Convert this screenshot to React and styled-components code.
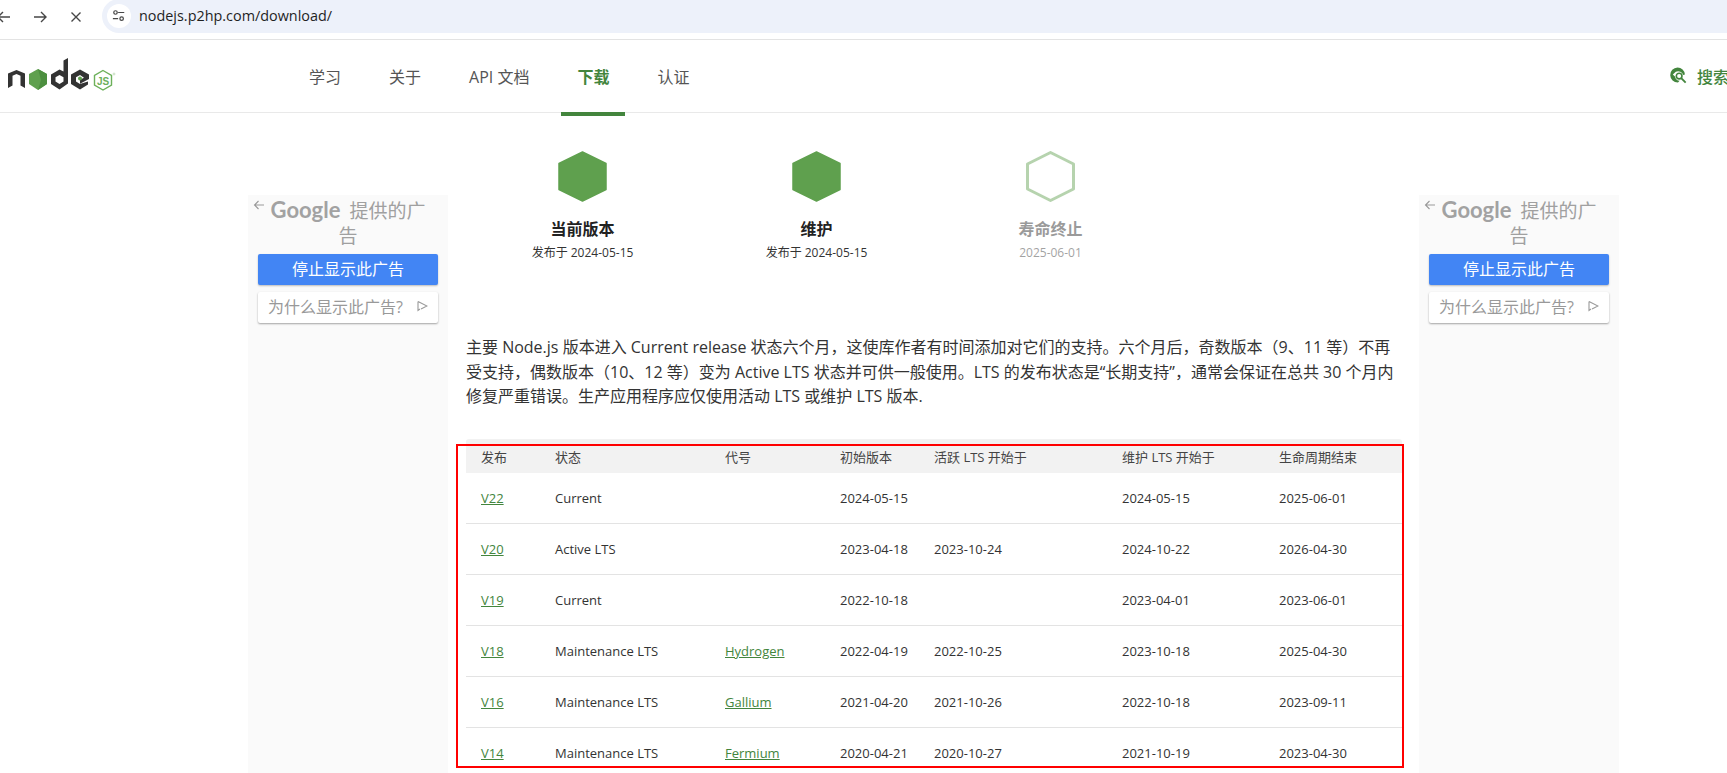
import React from "react";
import styled, { createGlobalStyle } from "styled-components";

const Global = createGlobalStyle`
  html, body { margin: 0; padding: 0; height: 773px; overflow: hidden; background: #fff; }
  body { font-family: "Open Sans", "Noto Sans CJK SC", sans-serif; color: #333; }
  * { box-sizing: border-box; }
`;

const Page = styled.div`
  width: 1727px;
  height: 773px;
  overflow: hidden;
  position: relative;
`;

const Toolbar = styled.div`
  height: 40px;
  border-bottom: 1px solid #e3e3e3;
  display: flex;
  align-items: flex-start;
  color: #474747;
`;

const NavIcons = styled.div`
  display: flex;
  align-items: center;
  gap: 20px;
  height: 33px;
  margin-left: -4px;
  width: 106px;
  flex: none;
`;

const Omnibox = styled.div`
  flex: 1;
  height: 34px;
  margin-top: -1px;
  background: #edf1fa;
  border-radius: 17px 0 0 17px;
  display: flex;
  align-items: center;
  padding-left: 5px;
`;

const SiteChip = styled.span`
  width: 24px;
  height: 24px;
  border-radius: 50%;
  background: #fff;
  display: flex;
  align-items: center;
  justify-content: center;
  margin-right: 8px;
`;

const Url = styled.span`
  font-family: "Open Sans", sans-serif;
  font-size: 14.4px;
  color: #1f1f1f;
  padding-bottom: 1px;
`;

const Header = styled.header`
  height: 73px;
  border-bottom: 1px solid #e9e9e9;
  display: flex;
  align-items: stretch;
  padding-left: 8px;
`;

const LogoLink = styled.a`
  display: flex;
  align-items: flex-start;
  padding-top: 18px;
  width: 285px;
  flex: none;
`;

const NavList = styled.nav`
  display: flex;
  gap: 16px;
  flex: 1;
`;

const NavLink = styled.a`
  display: flex;
  align-items: center;
  padding: 0 16px 1px;
  height: 76px;
  font-size: 16px;
  color: ${p => (p.$active ? "#43853d" : "#555")};
  font-weight: ${p => (p.$active ? 700 : 400)};
  border-bottom: 4px solid ${p => (p.$active ? "#43853d" : "transparent")};
`;

const Search = styled.div`
  display: flex;
  align-items: center;
  gap: 10px;
  width: 58px;
  flex: none;
  white-space: nowrap;
  font-size: 16px;
  font-weight: 500;
  color: #43853d;
  padding-bottom: 1px;
  & svg { flex: none; }
`;

const Main = styled.main`
  display: flex;
  padding-left: 248px;
  height: 660px;
`;

const AdColumn = styled.aside`
  width: 200px;
  flex: none;
  margin-top: 82px;
  background: #fafafa;
  padding: 2px 10px 0;
  position: relative;
`;

const AdBack = styled.svg`
  position: absolute;
  left: 5px;
  top: 4px;
`;

const AdTitle = styled.div`
  font-size: 19px;
  line-height: 25px;
  color: #a0a0a0;
  text-align: center;
  padding: 0 4px;
  height: 57px;
`;

const GoogleWord = styled.span`
  font-family: "Lato", sans-serif;
  font-weight: 700;
  font-size: 22px;
  margin-right: 9px;
  color: #a2a2a2;
`;

const StopButton = styled.div`
  height: 31px;
  border-radius: 2px;
  background: #4285f4;
  color: #fff;
  font-size: 16px;
  padding-bottom: 3px;
  display: flex;
  align-items: center;
  justify-content: center;
  box-shadow: 0 1px 2px rgba(0, 0, 0, 0.25);
`;

const WhyButton = styled.div`
  height: 31px;
  margin-top: 7px;
  border-radius: 2px;
  background: #fff;
  color: #999;
  font-size: 16px;
  padding: 0 0 4px 0;
  display: flex;
  align-items: center;
  justify-content: center;
  gap: 13px;
  box-shadow: 0 1px 2px rgba(0, 0, 0, 0.35);
`;

const Content = styled.section`
  width: 971px;
  flex: none;
  padding: 38px 18px 0;
  position: relative;
`;

const Phases = styled.div`
  display: flex;
  margin-left: -0.5px;
`;

const Phase = styled.div`
  width: 234px;
  display: flex;
  flex-direction: column;
  align-items: center;
  opacity: ${p => (p.$muted ? 0.45 : 1)};
`;

const PhaseTitle = styled.div`
  margin-top: 16px;
  font-size: 16px;
  line-height: 22px;
  font-weight: 700;
  color: #222;
`;

const PhaseDate = styled.div`
  margin-top: 4px;
  font-size: 12px;
  line-height: 17px;
  color: #333;
`;

const Intro = styled.p`
  margin: 74px 0 30.5px;
  font-size: 16px;
  line-height: 24.5px;
  color: #333;
  width: 930px;
`;

const Table = styled.table`
  width: 936px;
  table-layout: fixed;
  border-collapse: separate;
  border-spacing: 0;
  font-size: 13px;
  color: #333;
`;

const Th = styled.th`
  height: 34px;
  background: #f2f2f2;
  font-weight: 400;
  text-align: left;
  color: #444;
  padding: 0 0 0 ${p => (p.$first ? 15 : 0)}px;
  &:first-child { border-top-left-radius: 3px; }
  &:last-child { border-top-right-radius: 3px; }
`;

const Td = styled.td`
  height: 51px;
  border-bottom: 1px solid #e3e3e3;
  padding: 0 0 0 ${p => (p.$first ? 15 : 0)}px;
`;

const GreenLink = styled.a`
  color: #43853d;
  text-decoration: underline;
`;

const Highlight = styled.div`
  position: absolute;
  left: 8px;
  top: 331px;
  width: 948px;
  height: 324px;
  border: 2px solid #f00;
  pointer-events: none;
`;

const Stroke = ({ size = 16, children }) => (
  <svg width={size} height={size} viewBox="0 0 16 16" fill="none" stroke="#474747" strokeWidth="1.4">
    {children}
  </svg>
);

const NodeLogo = () => (
  <svg width="110" height="34" viewBox="0 0 110 34">
    <path d="M0 15.5 L8.5 12 L17 15.5 V30 L12.5 27.5 V17.8 L8.5 16 L4.5 17.8 V27.5 L0 30Z" fill="#333" />
    <path d="M30 11 L39 16 V26 L30 32 L21 26 V16Z" fill="#5fa04e" />
    <path d="M30 11 L39 16 V26 L30 32 L33 22Z" fill="#4c8f3f" />
    <path d="M60 0 V25.5 L51.5 31.5 L43 26 V16.5 L51.5 11.5 L55.5 13.5 V2.5Z M51.5 17 L47.5 19.3 V23.5 L51.5 26 L55.5 23.5 V19.3Z" fill="#333" fillRule="evenodd" />
    <path d="M72 11.5 L81 16.5 V21 L72 25.8 V21.8 L76 19.8 L72 17 L68 19.2 V23.5 L72 26 L80 23.5 V26.5 L72 31.5 L63 26 V16.5Z" fill="#333" />
    <circle cx="72" cy="20.5" r="2" fill="#5fa04e" />
    <path d="M95 12.5 L103.5 17.3 V27 L95 32 L86.5 27 V17.3Z" fill="none" stroke="#6cb05a" strokeWidth="1.4" />
    <text x="95" y="26.5" textAnchor="middle" fontSize="10" fontFamily="Liberation Sans, sans-serif" fill="#6cb05a" fontWeight="700">JS</text>
    <circle cx="106" cy="16" r="1" fill="none" stroke="#9ac38e" strokeWidth="0.5" />
  </svg>
);

const SearchGlobe = () => (
  <svg width="18" height="17" viewBox="0 0 19 18">
    <path d="M9 0.5 A8 8 0 1 0 9.5 16.5 L11.2 14.6 A5.6 5.6 0 0 1 6.3 10 L4 8 L7.2 5 A5.6 5.6 0 0 1 15 8.6 L16.8 8 A8 8 0 0 0 9 0.5Z" fill="#43853d" />
    <circle cx="10.7" cy="9.6" r="3" fill="none" stroke="#43853d" strokeWidth="1.7" />
    <path d="M12.9 11.8 L17.6 16.6" stroke="#43853d" strokeWidth="2" />
  </svg>
);

const Hexagon = ({ outline }) => (
  <svg width="49" height="51" viewBox="0 0 49 51">
    {outline ? (
      <path d="M24.5 1.5 L47.5 13 V38 L24.5 49.5 L1.5 38 V13Z" fill="none" stroke="#5fa04e" strokeWidth="3" strokeLinejoin="round" />
    ) : (
      <path d="M24.5 1 L48 12.5 V38.5 L24.5 50 L1 38.5 V12.5Z" fill="#5fa04e" stroke="#5fa04e" strokeWidth="1.5" strokeLinejoin="round" />
    )}
  </svg>
);

const Ad = () => (
  <AdColumn>
    <AdBack width="12" height="12" viewBox="0 0 12 12" fill="none" stroke="#999" strokeWidth="1.1">
      <path d="M11 6 H1.5 M5.5 2 L1.5 6 L5.5 10" />
    </AdBack>
    <AdTitle><GoogleWord>Google</GoogleWord>提供的广告</AdTitle>
    <StopButton>停止显示此广告</StopButton>
    <WhyButton>
      为什么显示此广告?
      <svg width="12" height="12" viewBox="0 0 12 12" fill="none" stroke="#999" strokeWidth="1.1">
        <path d="M2 1.5 L11 6 L5 9 M2 1.5 V10.5 L4 9" />
      </svg>
    </WhyButton>
  </AdColumn>
);

const colWidths = [89, 170, 115, 94, 188, 157, 123];
const heads = ["发布", "状态", "代号", "初始版本", "活跃 LTS 开始于", "维护 LTS 开始于", "生命周期结束"];
const rows = [
  ["V22", "Current", "", "2024-05-15", "", "2024-05-15", "2025-06-01"],
  ["V20", "Active LTS", "", "2023-04-18", "2023-10-24", "2024-10-22", "2026-04-30"],
  ["V19", "Current", "", "2022-10-18", "", "2023-04-01", "2023-06-01"],
  ["V18", "Maintenance LTS", "Hydrogen", "2022-04-19", "2022-10-25", "2023-10-18", "2025-04-30"],
  ["V16", "Maintenance LTS", "Gallium", "2021-04-20", "2021-10-26", "2022-10-18", "2023-09-11"],
  ["V14", "Maintenance LTS", "Fermium", "2020-04-21", "2020-10-27", "2021-10-19", "2023-04-30"],
];

export default function App() {
  return (
    <Page>
      <Global />
      <Toolbar>
        <NavIcons>
          <Stroke><path d="M14 8 H2 M7 3 L2 8 L7 13" /></Stroke>
          <Stroke><path d="M2 8 H14 M9 3 L14 8 L9 13" /></Stroke>
          <Stroke><path d="M3.5 3.5 L12.5 12.5 M12.5 3.5 L3.5 12.5" /></Stroke>
        </NavIcons>
        <Omnibox>
          <SiteChip>
            <Stroke size={14}>
              <path d="M7 4 H14 M1 11 H7" />
              <circle cx="4" cy="4" r="2" />
              <circle cx="11" cy="11" r="2" />
            </Stroke>
          </SiteChip>
          <Url>nodejs.p2hp.com/download/</Url>
        </Omnibox>
      </Toolbar>
      <Header>
        <LogoLink><NodeLogo /></LogoLink>
        <NavList>
          <NavLink>学习</NavLink>
          <NavLink>关于</NavLink>
          <NavLink>API 文档</NavLink>
          <NavLink $active>下载</NavLink>
          <NavLink>认证</NavLink>
        </NavList>
        <Search><SearchGlobe />搜索</Search>
      </Header>
      <Main>
        <Ad />
        <Content>
          <Phases>
            <Phase>
              <Hexagon />
              <PhaseTitle>当前版本</PhaseTitle>
              <PhaseDate>发布于 2024-05-15</PhaseDate>
            </Phase>
            <Phase>
              <Hexagon />
              <PhaseTitle>维护</PhaseTitle>
              <PhaseDate>发布于 2024-05-15</PhaseDate>
            </Phase>
            <Phase $muted>
              <Hexagon outline />
              <PhaseTitle>寿命终止</PhaseTitle>
              <PhaseDate>2025-06-01</PhaseDate>
            </Phase>
          </Phases>
          <Intro>
            主要 Node.js 版本进入 Current release 状态六个月，这使库作者有时间添加对它们的支持。六个月后，奇数版本（9、11 等）不再受支持，偶数版本（10、12 等）变为 Active LTS 状态并可供一般使用。LTS 的发布状态是“长期支持”，通常会保证在总共 30 个月内修复严重错误。生产应用程序应仅使用活动 LTS 或维护 LTS 版本.
          </Intro>
          <Table>
            <colgroup>
              {colWidths.map((w, i) => <col key={i} width={w} />)}
            </colgroup>
            <thead>
              <tr>
                {heads.map((h, i) => <Th key={h} $first={i === 0}>{h}</Th>)}
              </tr>
            </thead>
            <tbody>
              {rows.map(r => (
                <tr key={r[0]}>
                  {r.map((c, i) => (
                    <Td key={i} $first={i === 0}>
                      {i === 0 || i === 2 ? <GreenLink>{c}</GreenLink> : c}
                    </Td>
                  ))}
                </tr>
              ))}
            </tbody>
          </Table>
          <Highlight />
        </Content>
        <Ad />
      </Main>
    </Page>
  );
}
